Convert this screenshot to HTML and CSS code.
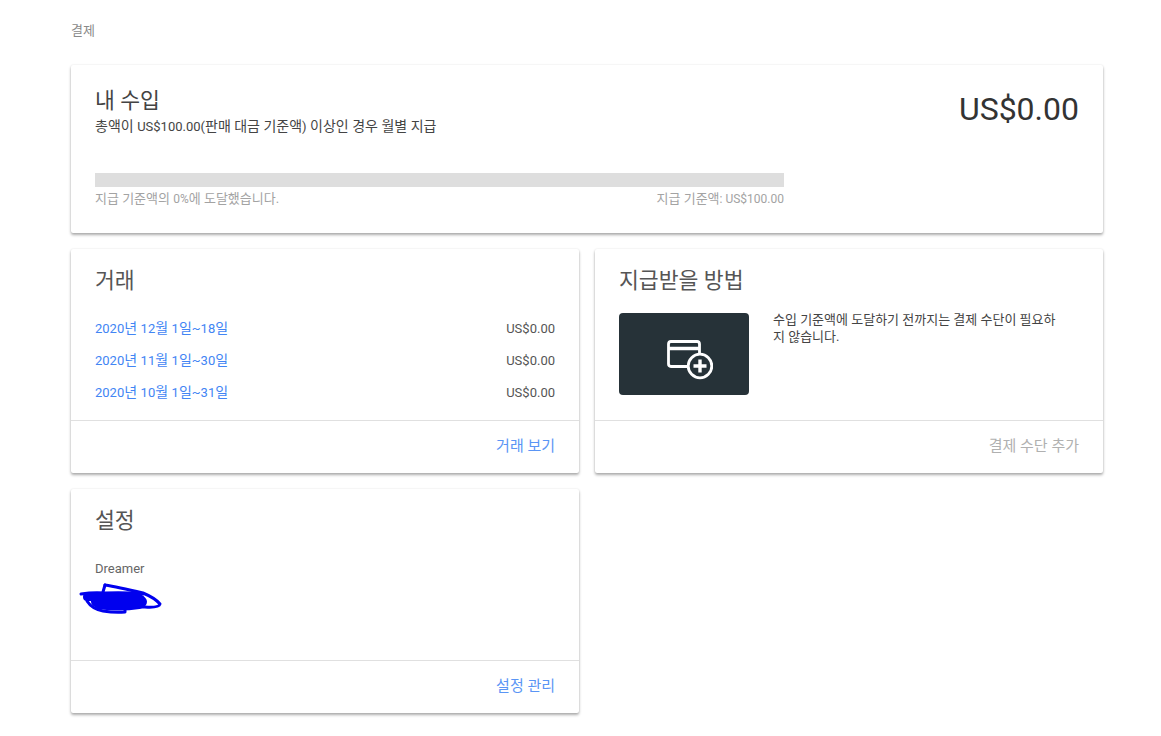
FILE: index.html
```html
<!DOCTYPE html>
<html lang="ko">
<head>
<meta charset="utf-8">
<title>결제</title>
<link rel="stylesheet" href="styles.css">
</head>
<body>
<main class="page">
  <div class="crumb">결제</div>
  <section class="card income">
    <div class="income-top">
      <div>
        <h2 class="income-title">내 수입</h2>
        <p class="income-sub">총액이 <span class="lat">US$100.00(</span>판매 대금 기준액<span class="lat">)</span> 이상인 경우 월별 지급</p>
      </div>
      <div class="amount">US$0.00</div>
    </div>
    <div class="progress-wrap">
      <div class="bar"></div>
      <div class="bar-labels"><span>지급 기준액의 <span class="lat">0%</span>에 도달했습니다.</span><span>지급 기준액<span class="lat">: US$100.00</span></span></div>
    </div>
  </section>
  <div class="grid">
    <section class="card tall">
      <div class="body">
        <h2 class="title">거래</h2>
        <ul class="rows">
          <li class="row"><a class="link"><span class="lat">2020</span>년 <span class="lat">12</span>월 <span class="lat">1</span>일<span class="lat">~18</span>일</a><span class="lat">US$0.00</span></li>
          <li class="row"><a class="link"><span class="lat">2020</span>년 <span class="lat">11</span>월 <span class="lat">1</span>일<span class="lat">~30</span>일</a><span class="lat">US$0.00</span></li>
          <li class="row"><a class="link"><span class="lat">2020</span>년 <span class="lat">10</span>월 <span class="lat">1</span>일<span class="lat">~31</span>일</a><span class="lat">US$0.00</span></li>
        </ul>
      </div>
      <div class="foot"><a class="action">거래 보기</a></div>
    </section>
    <section class="card tall">
      <div class="body">
        <h2 class="title">지급받을 방법</h2>
        <div class="pay">
          <div class="pay-tile">
            <svg class="pay-icon" width="46" height="40" viewBox="0 0 46 40" fill="none" stroke="#fff" stroke-width="2.800">
              <path d="M20 26.500H4A2.600 2.600 0 0 1 1.500 24V4A2.600 2.600 0 0 1 4 1.500h26A2.600 2.600 0 0 1 32.500 4V14"/>
              <path d="M1.500 8.500h31" stroke-width="3.500"/>
              <circle cx="33" cy="26" r="11.800"/>
              <path d="M33 19.500v13M26.500 26h13" stroke-width="3.400"/>
            </svg>
          </div>
          <p class="pay-text">수입 기준액에 도달하기 전까지는 결제 수단이 필요하지 않습니다.</p>
        </div>
      </div>
      <div class="foot"><a class="action muted">결제 수단 추가</a></div>
    </section>
    <section class="card tall">
      <div class="body">
        <h2 class="title">설정</h2>
        <div class="name">Dreamer</div>
        <svg class="scribble" width="84" height="32" viewBox="0 0 84 32" fill="none" stroke="#0000ee" stroke-linecap="round" stroke-linejoin="round">
          <path d="M2 11Q14 9 26 10Q46 9 64 11" stroke-width="3"/>
          <path d="M26 2Q38 4 64 10Q76 15 81 21Q80 25 66 24L46 24" stroke-width="3"/>
          <path d="M26 2L24 9M8 18Q13 26 24 28Q36 30 46 29L46 24" stroke-width="3"/>
          <path d="M8 14Q36 12 60 15Q68 19 60 22Q40 25 20 22Q10 17 24 14Q44 12 56 19M16 18Q34 21 52 20" stroke-width="8"/>
        </svg>
      </div>
      <div class="foot"><a class="action">설정 관리</a></div>
    </section>
  </div>
</main>
</body>
</html>
```

FILE: styles.css
```css
* { box-sizing: border-box; }
html, body { margin: 0; background: #fff; }
body { font-family: Roboto, "Noto Sans CJK KR", sans-serif; color: #212121; font-size: 13px; }
.page { padding: 22px 58px 23px 71px; }
.crumb { font-size: 13px; line-height: 18px; color: #8a8a8a; margin-bottom: 25px; }
.card { background: #fff; border-radius: 2px; box-shadow: 0 2px 3px rgba(0,0,0,.32), 0 0 2px rgba(0,0,0,.1); }
.income { height: 168px; padding: 22px 24px 0; display: flex; flex-direction: column; }
.income-top { display: flex; justify-content: space-between; }
.income-title { margin: 0; font-size: 21.600px; line-height: 28px; font-weight: 400; color: #444; }
.income-sub { margin: 2px 0 0; font-size: 14px; line-height: 18px; color: #444; }
.lat { font-size: 13px; }
.amount { font-size: 32px; line-height: 44px; font-weight: 400; color: #333; }
.progress-wrap { width: 689px; margin-top: 37px; }
.bar { height: 14px; background: #dedede; }
.bar-labels { display: flex; justify-content: space-between; font-size: 13px; line-height: 18px; color: #a3a3a3; margin-top: 3px; }
.bar-labels .lat { font-size: 12px; }
.grid { display: grid; grid-template-columns: 508px 508px; gap: 16px; margin-top: 16px; }
.tall { height: 224px; display: flex; flex-direction: column; }
.body { flex: 1; padding: 18px 24px 0; min-height: 0; }
.title { margin: 0; font-size: 21.600px; line-height: 28px; font-weight: 400; color: #555; }
.rows { list-style: none; margin: 17px 0 0; padding: 0; }
.row { display: flex; justify-content: space-between; align-items: baseline; height: 32px; line-height: 32px; font-size: 14px; color: #555; }
.link { color: #4285f4; }
.foot { height: 53px; border-top: 1px solid #e0e0e0; display: flex; justify-content: flex-end; padding: 14px 24px 0; }
.action { font-size: 15px; line-height: 22px; color: #5a95f5; }
.muted { color: #b0b0b0; }
.pay { display: flex; gap: 24px; margin-top: 18px; }
.pay-tile { width: 130px; height: 82px; background: #263238; border-radius: 4px; display: flex; align-items: center; justify-content: center; flex: none; padding: 12px 0 0 12px; }
.pay-text { margin: -2px 0 0; font-size: 13px; line-height: 17px; color: #444; width: 286px; }
.name { margin-top: 25px; font-size: 13px; line-height: 18px; color: #666; }
.scribble { display: block; margin: 5px 0 0 -16px; }
```
